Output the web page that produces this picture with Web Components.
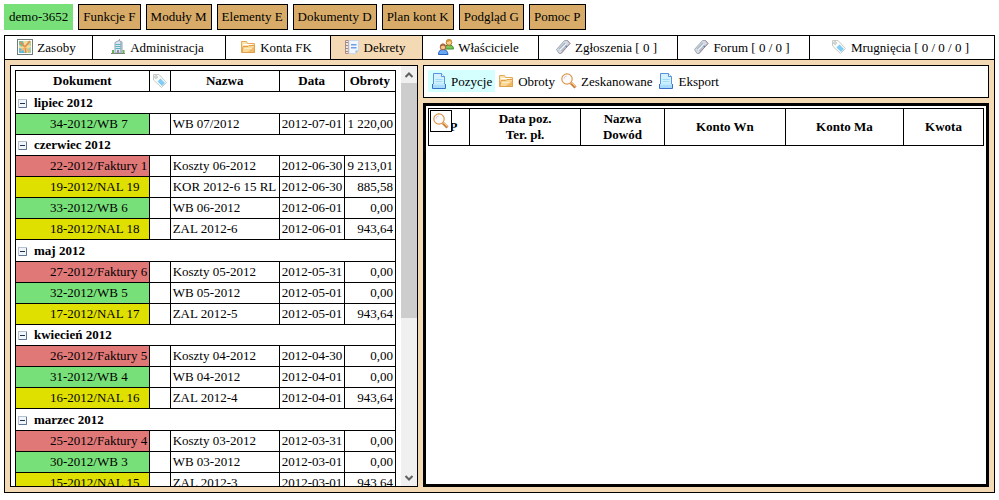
<!DOCTYPE html>
<html lang="pl">
<head>
<meta charset="utf-8">
<title>Dekrety</title>
<style>
  html, body { margin: 0; height: 100%; }
  body {
    --tan: #d8ac68; --wheat: #f4dab4; --green: #78e078; --red: #e07878; --yellow: #e0e000;
    font: 13px/16px "Liberation Serif", "Times New Roman", serif;
    color: #000; background: #fff;
  }
</style>
</head>
<body>
<app-shell>
  <menu-item slot="menu" kind="user">demo-3652</menu-item>
  <menu-item slot="menu">Funkcje F</menu-item>
  <menu-item slot="menu">Moduły M</menu-item>
  <menu-item slot="menu">Elementy E</menu-item>
  <menu-item slot="menu">Dokumenty D</menu-item>
  <menu-item slot="menu">Plan kont K</menu-item>
  <menu-item slot="menu">Podgląd G</menu-item>
  <menu-item slot="menu">Pomoc P</menu-item>

  <tab-item slot="tabs" icon="map">Zasoby</tab-item>
  <tab-item slot="tabs" icon="building">Administracja</tab-item>
  <tab-item slot="tabs" icon="folder">Konta FK</tab-item>
  <tab-item slot="tabs" icon="notebook" active>Dekrety</tab-item>
  <tab-item slot="tabs" icon="people">Właściciele</tab-item>
  <tab-item slot="tabs" icon="ticket">Zgłoszenia [ 0 ]</tab-item>
  <tab-item slot="tabs" icon="ticket">Forum [ 0 / 0 ]</tab-item>
  <tab-item slot="tabs" icon="tag">Mrugnięcia [ 0 / 0 / 0 ]</tab-item>

  <document-list></document-list>
  <detail-pane>
    <tool-item slot="tools" icon="page" active>Pozycje</tool-item>
    <tool-item slot="tools" icon="folder">Obroty</tool-item>
    <tool-item slot="tools" icon="lens">Zeskanowane</tool-item>
    <tool-item slot="tools" icon="page">Eksport</tool-item>
  </detail-pane>
</app-shell>

<script>
const ICONS = {
  map: `<rect x=".5" y=".5" width="15" height="15" fill="#fff" stroke="#6f7c78"/>
    <path d="M2 2h12v12H2z" fill="#f6dc9c"/>
    <path d="M2 2h4l1 3-2 3-3-2z" fill="#79c3a4"/><path d="M2 9l4 1 2 4H2z" fill="#62bbdc"/>
    <path d="M10 2h4v5l-3-1z" fill="#b5d69a"/><path d="M10 10l4-2v6h-3z" fill="#9fd0b4"/>
    <path d="M3 3l5 5 1 6M13 2L8 8" fill="none" stroke="#e58a45" stroke-width="1.6"/>
    <path d="M8 8l5 5M4 12l4-4" fill="none" stroke="#f0b668" stroke-width="1.2"/>`,
  building: `<path d="M5 3.500l4-2 3 1.500v11H5z" fill="#dde7ef" stroke="#93a3b3"/>
    <path d="M9.500 0v2" stroke="#93a3b3"/><path d="M10 3h2v11h-2z" fill="#aab8c8"/>
    <path d="M5.500 5.500h5M5.500 7.500h5M5.500 9.500h5" stroke="#58b3c2"/>
    <path d="M2 11h2v3H2zM12.500 11h2v3h-2z" fill="#6fae5f"/><path d="M7 11h2v3H7z" fill="#8497aa"/>
    <path d="M1 14.500h14" stroke="#7c8a72"/>`,
  folder: `<path d="M1.500 13.500v-11h5l1 2h7v9z" fill="#fbe3b0" stroke="#e4ab5c"/>
    <path d="M3 5.500h9" stroke="#fff"/>
    <path d="M2 13.500l1-6h5l1-1h5.500v7z" fill="#f9d797" stroke="#e0a04c"/>
    <path d="M4 9.500h9" stroke="#fdeabf"/><path d="M9 12l5-4v5H8z" fill="#efb964"/>`,
  notebook: `<path d="M1.500 1.500h3v13h-3z" fill="#f4e4dc" stroke="#b98a78"/>
    <path d="M5 1.500h9.500v10l-3 3H5z" fill="#f2f7fe" stroke="#c9d8ea"/>
    <path d="M7 5h5.500v1.500H7zM7 8h5.500v1.500H7z" fill="#6f9fe4"/>
    <path d="M1 3.500h3M1 6.500h3M1 9.500h3M1 12.500h3" stroke="#8e8e96"/>
    <path d="M11.500 14.500v-3h3z" fill="#a5bddc"/>`,
  people: `<path d="M6.500 10q0-4 4.500-4t4.500 4z" fill="#7cc653" stroke="#3e8d2c"/>
    <circle cx="11" cy="3.500" r="2.800" fill="#f7cf95" stroke="#b8781f"/>
    <path d="M8 3.500q0-3.500 3-3.500t3 3.500l-2-1.500z" fill="#d09434"/>
    <path d="M.500 15.500q0-5 4.500-5t5 5z" fill="#69a9f0" stroke="#2460bc"/>
    <circle cx="5" cy="8" r="2.800" fill="#f5c694" stroke="#a7643a"/>
    <path d="M2 8q0-3.500 3-3.500T8 8L5 6.500z" fill="#a9683a"/>`,
  ticket: `<path d="M1.500 10.500L9.500 1.500l3 0 2.500 3L6 14.500H4z" fill="#d3dbe2" stroke="#a1abb6"/>
    <path d="M12.500 1.500L15 4.500l-9 10" fill="none" stroke="#a98796"/>
    <path d="M4 10l6-6M6.500 12l6-6" stroke="#a9b6c4" stroke-width="1.200"/>
    <path d="M5 11l6-6" stroke="#f4f7fa"/><path d="M10.500 7l1.500 1" stroke="#4d78c0"/>`,
  tag: `<path d="M1.500 1.500h5.500l7.500 8-5 5-8-7.500z" fill="#fafaf8" stroke="#c8cbc5"/>
    <circle cx="4" cy="4" r="1.300" fill="#fff" stroke="#b5babb"/>
    <path d="M8.500 5.500l4.500 4.500-3 3L5.500 8.500z" fill="#82cdf8"/>`,
  page: `<path d="M2.500 .500h8l3 3v8.500h-11z" fill="#d3f1ff" stroke="#5b93de"/>
    <path d="M10.500 .500v3h3" fill="#fff" stroke="#5b93de"/>
    <path d="M4.500 6.500h7M4.500 8.500h7" stroke="#9bdcfa"/>
    <path d="M1.500 11v4.500h13V11" fill="#a9dcfa" stroke="#3a70c8"/>
    <path d="M3 10h10v2H3z" fill="#c2ecff"/>`,
  lens: `<circle cx="6" cy="6" r="5.200" fill="#fdfbff" stroke="#d99a4c" stroke-width="1.200"/>
    <path d="M3 6q0-3 3-3" fill="none" stroke="#dccfe8"/>
    <path d="M10 10l4.500 4.500" stroke="#c87a3a" stroke-width="3"/>
    <path d="M10.500 9.500l4 4" stroke="#f5c987" stroke-width="1.200"/>`,
  up: `<path d="M4.500 10L8 6.500l3.500 3.500" fill="none" stroke="#606060" stroke-width="2"/>`,
  down: `<path d="M4.500 6L8 9.500 11.500 6" fill="none" stroke="#606060" stroke-width="2"/>`,
  minus: `<rect x="2.500" y="4.500" width="8" height="8" fill="#f1f4f8" stroke="#b4c1d0"/>
    <path d="M10.500 5v7.500H3" fill="none" stroke="#5f7694"/><path d="M4 8.500h5" stroke="#1d3350"/>`
};

class Base extends HTMLElement {
  constructor() {
    super();
    this.attachShadow({ mode: "open" });
  }
  connectedCallback() {
    const t = document.createElement("template");
    t.innerHTML = `<style>*{box-sizing:border-box}button{font:inherit;color:inherit;margin:0;cursor:pointer}${this.css()}</style>${this.html()}`;
    this.shadowRoot.replaceChildren(t.content.cloneNode(true));
  }
}

customElements.define("ui-icon", class extends Base {
  css() { return `:host{display:block;flex:none;width:16px;height:16px}svg{display:block;width:100%;height:100%}`; }
  html() { return `<svg viewBox="0 0 16 16" aria-hidden="true">${ICONS[this.getAttribute("name")]}</svg>`; }
});

customElements.define("menu-item", class extends Base {
  css() { return `:host{display:block}
    button{display:block;padding:4px;border:1px solid #000;background:var(--tan)}
    :host([kind=user]) button{border-color:var(--green);background:var(--green)}`; }
  html() { return `<button type="button"><slot></slot></button>`; }
});

customElements.define("tab-item", class extends Base {
  css() { return `:host{display:block;border-right:1px solid #000}
    button{display:flex;width:100%;height:100%;align-items:flex-start;justify-content:center;gap:4px;
      padding:3px 4px 3px 0;border:0;background:#fff;white-space:nowrap}
    span{padding-top:1px}
    :host([active]) button{background:var(--wheat)}`; }
  html() { return `<button type="button" role="tab" aria-selected="${this.hasAttribute("active")}"><ui-icon name="${this.getAttribute("icon")}"></ui-icon><span><slot></slot></span></button>`; }
});

customElements.define("tool-item", class extends Base {
  css() { return `:host{display:block}
    button{display:flex;align-items:flex-start;gap:4px;padding:3px 3px 2px;border:0;background:none;white-space:nowrap}
    span{padding-top:1px}
    :host([active]) button{background:#d5ffff}`; }
  html() { return `<button type="button"><ui-icon name="${this.getAttribute("icon")}"></ui-icon><span><slot></slot></span></button>`; }
});

customElements.define("scroll-rail", class extends Base {
  css() { return `:host{display:flex;flex-direction:column;width:16px;background:#f0f0f0}
    button{display:flex;align-items:center;justify-content:center;height:17px;padding:0;border:0;background:none}
    .track{flex:1}.thumb{height:61%;background:#cdcdcd}`; }
  html() { return `<button type="button" aria-label="W górę"><ui-icon name="up"></ui-icon></button>
    <div class="track"><div class="thumb"></div></div>
    <button type="button" aria-label="W dół"><ui-icon name="down"></ui-icon></button>`; }
});

const GROUPS = [
  ["lipiec 2012", [["green", "34-2012/WB 7", "WB 07/2012", "2012-07-01", "1 220,00"]]],
  ["czerwiec 2012", [
    ["red", "22-2012/Faktury 1", "Koszty 06-2012", "2012-06-30", "9 213,01"],
    ["yellow", "19-2012/NAL 19", "KOR 2012-6 15 RL", "2012-06-30", "885,58"],
    ["green", "33-2012/WB 6", "WB 06-2012", "2012-06-01", "0,00"],
    ["yellow", "18-2012/NAL 18", "ZAL 2012-6", "2012-06-01", "943,64"]]],
  ["maj 2012", [
    ["red", "27-2012/Faktury 6", "Koszty 05-2012", "2012-05-31", "0,00"],
    ["green", "32-2012/WB 5", "WB 05-2012", "2012-05-01", "0,00"],
    ["yellow", "17-2012/NAL 17", "ZAL 2012-5", "2012-05-01", "943,64"]]],
  ["kwiecień 2012", [
    ["red", "26-2012/Faktury 5", "Koszty 04-2012", "2012-04-30", "0,00"],
    ["green", "31-2012/WB 4", "WB 04-2012", "2012-04-01", "0,00"],
    ["yellow", "16-2012/NAL 16", "ZAL 2012-4", "2012-04-01", "943,64"]]],
  ["marzec 2012", [
    ["red", "25-2012/Faktury 4", "Koszty 03-2012", "2012-03-31", "0,00"],
    ["green", "30-2012/WB 3", "WB 03-2012", "2012-03-01", "0,00"],
    ["yellow", "15-2012/NAL 15", "ZAL 2012-3", "2012-03-01", "943,64"]]]
];

customElements.define("document-list", class extends Base {
  css() { return `:host{display:flex;min-height:0;border:1px solid #000;background:#fff}
    .view{flex:1;min-width:0;overflow:hidden;padding:4px 5px 0 4px}
    table{width:100%;table-layout:fixed;border-collapse:collapse}
    th,td{height:21px;padding:2px;border:1px solid #000;white-space:nowrap;text-align:left;font-weight:normal}
    thead th{text-align:center;font-weight:bold}
    thead ui-icon{margin:0 auto}
    tbody:nth-of-type(odd) .month th{height:22px}
    .month th{padding-left:0}
    .month div{display:flex;align-items:center;gap:2px;font-weight:bold}
    .month button{padding:0;border:0;background:none}
    .doc{padding-left:34px}.sum{text-align:right}
    .green{background:var(--green)}.red{background:var(--red)}.yellow{background:var(--yellow)}
    .c1{width:35.2%}.c2{width:5.5%}.c3{width:28.7%}.c4{width:17.1%}`; }
  html() {
    const row = ([tone, doc, name, date, sum]) =>
      `<tr><td class="doc ${tone}">${doc}</td><td></td><td>${name}</td><td>${date}</td><td class="sum">${sum}</td></tr>`;
    return `<div class="view"><table>
      <colgroup><col class="c1"><col class="c2"><col class="c3"><col class="c4"><col></colgroup>
      <thead><tr><th>Dokument</th><th><ui-icon name="tag"></ui-icon></th><th>Nazwa</th><th>Data</th><th>Obroty</th></tr></thead>
      ${GROUPS.map(([m, rows]) => `<tbody><tr class="month"><th colspan="5"><div><button type="button" aria-label="Zwiń ${m}"><ui-icon name="minus"></ui-icon></button>${m}</div></th></tr>${rows.map(row).join("")}</tbody>`).join("")}
    </table></div><scroll-rail></scroll-rail>`;
  }
});

customElements.define("detail-pane", class extends Base {
  css() { return `:host{display:flex;flex-direction:column;gap:5px;min-width:0;min-height:0}
    .tools{display:flex;padding:4px 4px 5px;border:1px solid #000;background:#fff}
    .box{position:relative;flex:1;padding:2px;border:3px solid #000;background:#fff}
    table{width:100%;table-layout:fixed;border-collapse:collapse}
    th{height:37px;padding:2px;border:1px solid #000}
    .c1{width:7.4%}.c2{width:20%}.c3{width:15.1%}.c4{width:21.8%}.c5{width:21.3%}
    .find{position:absolute;left:4px;top:4px;display:block;padding:2px;border:1px solid #000;background:#fff}`; }
  html() { return `<div class="tools"><slot name="tools"></slot></div>
    <div class="box"><table>
      <colgroup><col class="c1"><col class="c2"><col class="c3"><col class="c4"><col class="c5"><col></colgroup>
      <thead><tr><th>LP</th><th>Data poz.<br>Ter. pł.</th><th>Nazwa<br>Dowód</th><th>Konto Wn</th><th>Konto Ma</th><th>Kwota</th></tr></thead>
    </table><button class="find" type="button" aria-label="Szukaj"><ui-icon name="lens"></ui-icon></button></div>`; }
});

customElements.define("app-shell", class extends Base {
  css() { return `:host{display:flex;flex-direction:column;gap:5px;box-sizing:border-box;height:100vh;padding:4px 4px 7px}
    nav{display:flex;gap:5px}
    .frame{flex:1;min-height:0;display:flex;flex-direction:column;border:1px solid #000;background:var(--wheat)}
    .tabs{display:grid;grid-template-columns:88fr 133fr 105fr 92fr 116fr 139fr 132fr 184fr;border-bottom:1px solid #000}
    ::slotted(tab-item:last-of-type){border-right:0}
    main{flex:1;min-height:0;display:grid;grid-template-columns:408fr 566fr;grid-template-rows:minmax(0,1fr);gap:5px;padding:5px}`; }
  html() { return `<nav><slot name="menu"></slot></nav>
    <div class="frame"><div class="tabs" role="tablist"><slot name="tabs"></slot></div><main><slot></slot></main></div>`; }
});
</script>
</body>
</html>
